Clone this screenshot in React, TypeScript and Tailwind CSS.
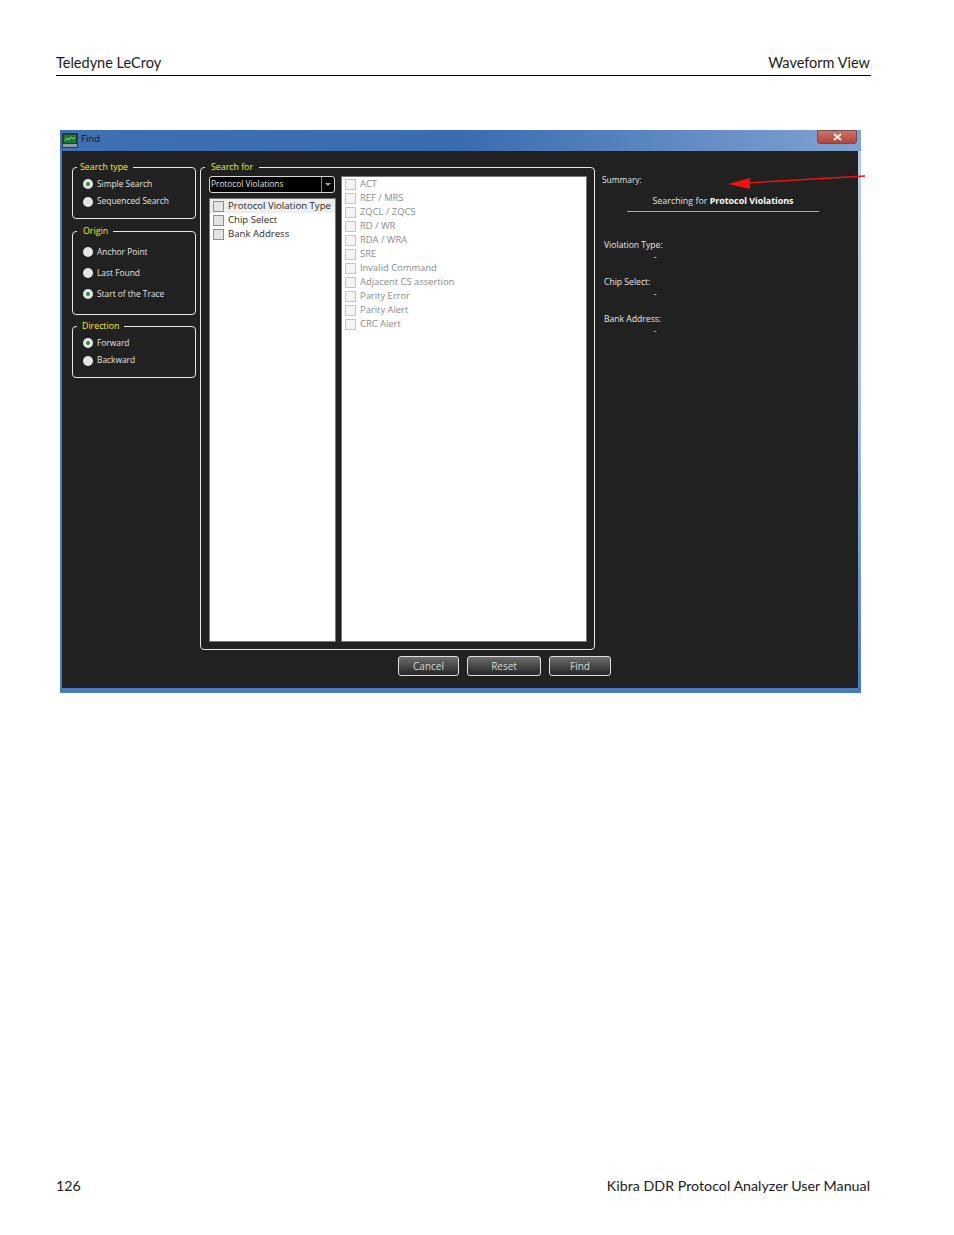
const body = "font-['Open_Sans',sans-serif]"

const violations = [
  'ACT',
  'REF / MRS',
  'ZQCL / ZQCS',
  'RD / WR',
  'RDA / WRA',
  'SRE',
  'Invalid Command',
  'Adjacent CS assertion',
  'Parity Error',
  'Parity Alert',
  'CRC Alert',
]

function Radio({ label, checked }: { label: string; checked?: boolean }) {
  return (
    <div className="flex items-center gap-[4px] h-[14px]">
      <span className="w-[10px] h-[10px] rounded-full bg-[#e4e4e4] flex items-center justify-center shrink-0">
        {checked && <span className="w-[4px] h-[4px] rounded-full bg-[#2f8a3c]" />}
      </span>
      <span className="text-[8.4px] leading-none text-[#e4e4e4] whitespace-nowrap">{label}</span>
    </div>
  )
}

function Group({ title, legend, className, children }: { title: string; legend: string; className: string; children: React.ReactNode }) {
  return (
    <div className={`relative border border-[#e8e8e8] rounded-[4px] ${className}`}>
      <span className={`absolute -top-[7px] left-[4px] ${legend} bg-[#212121] text-[8.8px] leading-[12px] text-[#f0f030] whitespace-nowrap`}>
        {title}
      </span>
      {children}
    </div>
  )
}

function Box({ muted }: { muted?: boolean }) {
  return (
    <span className={`w-[11px] h-[11px] shrink-0 border ${muted ? 'border-[#c4c4c4] bg-[#f4f4f4]' : 'border-[#8e8e8e] bg-[#e4e4e4]'}`} />
  )
}

function Btn({ label, className }: { label: string; className: string }) {
  return (
    <button className={`h-[20px] shrink-0 rounded-[3px] border border-[#e0e0e0] bg-gradient-to-b from-[#6e6e6e] to-[#262626] text-[10px] leading-none text-[#d8d8d8] ${className}`}>
      {label}
    </button>
  )
}

function SummaryRow({ label }: { label: string }) {
  return (
    <div className="h-[37px] pl-[2px]">
      <div className="text-[8.6px] leading-[12px] text-[#e8e8e8]">{label}</div>
      <div className="w-[102px] text-center text-[9.5px] leading-[12px] text-[#e0e0e0]">-</div>
    </div>
  )
}

export default function App() {
  return (
    <div className="w-[954px] h-[1235px] bg-white flex flex-col px-[56px] font-['Lato',sans-serif] text-[#1a1a1a] overflow-hidden">
      <div className="h-[76px] pt-[54px] border-b border-black flex justify-between text-[14.5px] leading-[18px] w-[815px]">
        <span>Teledyne LeCroy</span>
        <span className="pr-[1px]">Waveform View</span>
      </div>

      {/* Find dialog */}
      <div className={`relative mt-[54px] ml-[4px] w-[801px] h-[563px] flex flex-col bg-[#4a7bbd] ${body}`}>
        <div className="relative h-[21px] shrink-0 flex items-center pl-[2px] bg-gradient-to-r from-[#3f70b4] via-[#3a6cb0] to-[#7fa3d2]">
          <svg width="16" height="15" viewBox="0 0 16 15" className="shrink-0">
            <rect width="16" height="15" fill="#2c3a34" />
            <rect x="2" y="2" width="12" height="8" fill="#1c7a34" />
            <path d="M3 8 L5 5 L7 7 L9 4 L11 6 L13 4" stroke="#7fe07f" strokeWidth="1" fill="none" />
            <rect x="1" y="11" width="14" height="3" fill="#8a9aa8" />
          </svg>
          <span className="ml-[3px] -mt-[2px] text-[9.5px] text-[#0e1520]">Find</span>
          <div className="absolute right-[4px] top-0 w-[40px] h-[14px] rounded-b-[3px] border border-[#7a4a4a] bg-gradient-to-b from-[#c8756c] to-[#b5433a] flex items-center justify-center">
            <svg width="9" height="8" viewBox="0 0 9 8">
              <path d="M1 1 L8 7 M8 1 L1 7" stroke="#eeeeee" strokeWidth="2" />
            </svg>
          </div>
        </div>

        <div className="flex-1 flex ml-[2px] mr-[3px] mb-[5px] bg-[#212121] pt-[16px] pl-[10px]">
          {/* left column */}
          <div className="w-[124px] shrink-0 flex flex-col">
            <Group title="Search type" legend="w-[56px] pl-[3px]" className="h-[52px] pt-[9px] pl-[10px] flex flex-col gap-[3.5px]">
              <Radio label="Simple Search" checked />
              <Radio label="Sequenced Search" />
            </Group>
            <Group title="Origin" legend="w-[36px] pl-[6px]" className="mt-[12px] h-[84px] pt-[13px] pl-[10px] flex flex-col gap-[7px]">
              <Radio label="Anchor Point" />
              <Radio label="Last Found" />
              <Radio label="Start of the Trace" checked />
            </Group>
            <Group title="Direction" legend="w-[47px] pl-[5px]" className="mt-[11px] h-[52px] pt-[9px] pl-[10px] flex flex-col gap-[3.5px]">
              <Radio label="Forward" checked />
              <Radio label="Backward" />
            </Group>
          </div>

          {/* search for */}
          <div className="ml-[4px] w-[395px] shrink-0 flex flex-col items-start">
            <Group title="Search for" legend="w-[54px] pl-[6px]" className="w-[395px] h-[483px] pt-[8px] pb-[7px] pl-[8px] pr-[7px] flex gap-[5px]">
              <div className="w-[127px] shrink-0 flex flex-col">
                <div className="h-[17px] mr-[1px] rounded-[3px] border border-[#d8d8d8] bg-black flex items-center justify-between">
                  <span className="pl-[1px] text-[8.3px] leading-none text-[#e4e4e4] whitespace-nowrap">Protocol Violations</span>
                  <span className="w-[13px] h-full border-l border-[#888] flex items-center justify-center">
                    <span className="w-0 h-0 border-x-[3px] border-x-transparent border-t-[3px] border-t-[#aaa]" />
                  </span>
                </div>
                <div className="mt-[5px] flex-1 bg-white border border-[#777] text-[9.6px] leading-none text-[#2a2a2a]">
                  <div className="h-[14px] flex items-center gap-[4px] pl-[3px] bg-[#eeeeee] whitespace-nowrap">
                    <Box />
                    <span>Protocol Violation Type</span>
                  </div>
                  <div className="h-[14px] flex items-center gap-[4px] pl-[3px]">
                    <Box />
                    <span>Chip Select</span>
                  </div>
                  <div className="h-[14px] flex items-center gap-[4px] pl-[3px]">
                    <Box />
                    <span>Bank Address</span>
                  </div>
                </div>
              </div>
              <div className="flex-1 bg-white border border-[#777] pl-[3px]">
                {violations.map((v) => (
                  <div key={v} className="h-[14px] flex items-center gap-[4px] text-[9.4px] leading-none text-[#8a8a8a] whitespace-nowrap">
                    <Box muted />
                    <span>{v}</span>
                  </div>
                ))}
              </div>
            </Group>
            <div className="mt-[6px] ml-[198px] flex gap-[8px]">
              <Btn label="Cancel" className="w-[61px]" />
              <Btn label="Reset" className="w-[74px]" />
              <Btn label="Find" className="w-[62px]" />
            </div>
          </div>

          {/* summary */}
          <div className="ml-[7px] flex-1 flex flex-col">
            <div className="h-[27px] text-[8.4px] leading-[26px] text-[#e4e4e4]">Summary:</div>
            <div className="ml-[25px] w-[192px] h-[18px] border-b border-[#a8a8a8] text-center text-[8.9px] leading-[13px] text-[#e0e0e0] whitespace-nowrap">
              Searching for <b className="text-white">Protocol Violations</b>
            </div>
            <div className="mt-[27px]">
              <SummaryRow label="Violation Type:" />
              <SummaryRow label="Chip Select:" />
              <SummaryRow label="Bank Address:" />
            </div>
          </div>
        </div>

        {/* light right edge of the window frame */}
        <div className="absolute right-0 top-[21px] bottom-[5px] w-[3px] bg-gradient-to-b from-[#b5cce8] via-[#a5bfe2] to-[#4a7bbd]" />

        {/* annotation arrow */}
        <svg width="140" height="16" viewBox="0 0 140 16" className="absolute left-[666px] top-[45px]">
          <path d="M139 1 L20 8" stroke="#f01010" strokeWidth="1.5" fill="none" />
          <path d="M2 9 L24 3 L24 14 Z" fill="#f01010" />
        </svg>
      </div>

      <div className="mt-auto mb-[40px] flex justify-between text-[14.25px] leading-[18px] w-[814px]">
        <span>126</span>
        <span>Kibra DDR Protocol Analyzer User Manual</span>
      </div>
    </div>
  )
}
